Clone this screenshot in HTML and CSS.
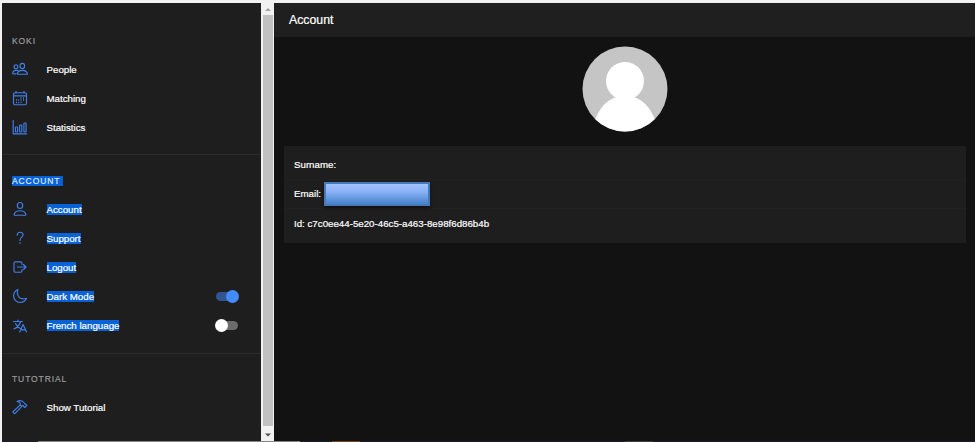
FILE: index.html
```html
<!DOCTYPE html>
<html lang="en">
<head>
<meta charset="utf-8">
<title>Account</title>
<link rel="stylesheet" href="styles.css">
</head>
<body>
<div class="app">
  <nav class="menu">
    <section class="group">
      <h2><span>KOKI</span></h2>
      <a class="item"><svg viewBox="0 0 16 16"><ellipse cx="10.3" cy="5" rx="2.3" ry="2.6"/><path d="M5.7 13.2h9.2c.5 0 .6-.4.4-.9-.6-1.9-2.6-3-5-3s-4.4 1.1-5 3c-.2.5-.1.9.4.9z"/><ellipse cx="4" cy="5.8" rx="1.9" ry="2.1"/><path d="M6.1 9.6C3.700 8.700 1.100 9.700.7 12c-.1.5 0 .8.500.8h2.500"/></svg><span>People</span></a>
      <a class="item"><svg viewBox="0 0 16 16"><rect x="1.500" y="2.700" width="13" height="12" rx="1.500"/><path d="M1.500 5.800h13M4 1.200v1.500M12 1.200v1.500"/><path class="dots" d="M8.500 8h1M11 8h1M4 10h1M6.200 10h1M8.500 10h1M11 10h1M4 12.500h1M6.200 12.500h1M8.500 12.500h1"/></svg><span>Matching</span></a>
      <a class="item"><svg viewBox="0 0 16 16"><path d="M1.200 1.300v13.500h13.500"/><rect x="3.400" y="8" width="2.200" height="5" rx=".5"/><rect x="7.600" y="6" width="2.200" height="7" rx=".5"/><rect x="11.900" y="4" width="2.200" height="9" rx=".5"/></svg><span>Statistics</span></a>
    </section>
    <section class="group selected">
      <h2><span>ACCOUNT</span></h2>
      <a class="item"><svg viewBox="0 0 16 16"><ellipse cx="8" cy="4.500" rx="2.700" ry="3"/><path d="M3.100 14.200h9.800c1 0 1.100-.5.9-1.100-.6-2.300-3.100-3.400-5.800-3.400s-5.200 1.100-5.800 3.400c-.2.6-.1 1.100.9 1.100z"/></svg><span>Account</span></a>
      <a class="item"><svg viewBox="0 0 16 16"><path d="M5.200 5.200c0-2 1.100-3 2.900-3 1.700 0 2.900 1 2.900 2.600C11 7.300 8 7.100 8 10.400"/><circle class="solid" cx="8" cy="13" r=".8"/></svg><span>Support</span></a>
      <a class="item"><svg viewBox="0 0 16 16"><path d="M10 10.500v1.300c0 .8-.6 1.400-1.400 1.400H3.400c-.8 0-1.400-.6-1.400-1.400V4.200c0-.8.600-1.400 1.400-1.400h5c.9 0 1.600.6 1.600 1.400v1.300M11.500 10.500 14 8l-2.500-2.500M5.500 8H14"/></svg><span>Logout</span></a>
      <a class="item"><svg viewBox="0 0 16 16"><path d="M5.300 4.800c0-1.200.1-2.300.6-3.300C3.100 2.700 1.600 5.100 1.600 8c0 3.600 2.900 6.500 6.500 6.500 2.900 0 5.300-1.600 6.500-4.200-1 .4-2.100.6-3.300.6-3.300 0-6-2.700-6-6.100z"/></svg><span>Dark Mode</span><i class="toggle on"></i></a>
      <a class="item"><svg viewBox="0 0 16 16"><path d="M1.500 3.500h9M6 2v1.500M8.600 3.500C7.700 7 4.800 9.700 2 11M3.500 5.500c.8 2 2.800 4 4.800 5M7.700 14l3.400-7.500 3.400 7.500M8.700 11.800h4.800"/></svg><span>French language</span><i class="toggle"></i></a>
    </section>
    <section class="group">
      <h2><span>TUTOTRIAL</span></h2>
      <a class="item"><svg viewBox="0 0 16 16"><path d="M8.200 5.800 1.300 12.500c-.3.300-.3.700 0 1l.9.900c.3.300.7.300 1 0l6.600-7M5.200 2.600c2.200-1.500 4.600-1.100 6.300.5l1.200 1.200c0 .7.300 1 .9.900l1.300 1.200-2.100 2.100-1.200-1.200c0-.7-.3-.9-.9-.8L9.800 7.400 8.200 5.800c.6-1.600-.5-2.900-3-3.200z"/></svg><span>Show Tutorial</span></a>
    </section>
  </nav>
  <div class="scrollbar">
    <svg class="arrow" viewBox="0 0 12 12"><path fill="#a3a3a3" d="M3 8h6L6 5z"/></svg>
    <div class="thumb"></div>
    <svg class="arrow end" viewBox="0 0 12 12"><path fill="#505050" d="M3 6h6L6 9z"/></svg>
  </div>
  <main>
    <header>Account</header>
    <svg class="avatar" viewBox="0 0 86 86"><defs><clipPath id="round"><circle cx="43" cy="43" r="42.500"/></clipPath></defs><g clip-path="url(#round)"><path fill="#c5c5c5" d="M0 0h86v86H0z"/><circle cx="43" cy="35" r="19" fill="#fff"/><path fill="#fff" d="M12 77C17 61 26 53 35 51h16c9 2 18 10 23 26v9H12z"/></g></svg>
    <div class="card">
      <div class="field">Surname:</div>
      <div class="field">Email: <span class="mask"></span></div>
      <div class="field">Id: c7c0ee44-5e20-46c5-a463-8e98f6d86b4b</div>
    </div>
  </main>
</div>
<div class="taskbar"><i class="window light"></i><i class="window orange"></i><i class="window gray"></i></div>
</body>
</html>
```
FILE: styles.css
```css
* { box-sizing: border-box; }
body {
  margin: 0;
  height: 442px;
  overflow: hidden;
  display: flex;
  flex-direction: column;
  padding: 3px 0 0 2px;
  background: #f1f1f1;
  font-family: "Liberation Sans", Arial, sans-serif;
  font-size: 9.730px;
  -webkit-text-stroke: .2px;
  color: #fff;
}
.app { flex: 1; display: flex; min-height: 0; }
.menu { width: 259px; background: #1e1e1e; overflow: hidden; }
.group { padding: 12.300px 0 12.500px; border-bottom: 1px solid #2b2b2b; }
.group:first-child { padding-top: 24.500px; }
.group:last-child { border: 0; }
h2 {
  margin: 0;
  height: 27px;
  padding-left: 10px;
  display: flex;
  align-items: center;
  font-size: 8.500px;
  font-weight: 400;
  letter-spacing: .9px;
  color: #9a9a9a;
}
.item { height: 29.100px; display: flex; align-items: center; padding: 0 23.500px 0 10px; }
.item svg {
  width: 16px;
  height: 16px;
  margin-right: 18.500px;
  fill: none;
  stroke: #3f7fe8;
  stroke-width: 1.150;
  stroke-linecap: round;
  stroke-linejoin: round;
}
.item .dots { stroke-width: 1.300; stroke-linecap: butt; }
.item .solid { fill: #3f7fe8; stroke: none; }
.selected span { background: #0862d6; color: #fff; line-height: 11px; }
.selected h2 span { padding-right: 3px; color: #dbe7fa; line-height: 10px; }
.toggle {
  position: relative;
  width: 22px;
  height: 9px;
  margin-left: auto;
  border-radius: 5px;
  background: #6c6c6c;
}
.toggle::after {
  content: "";
  position: absolute;
  left: -1px;
  top: -2px;
  width: 13px;
  height: 13px;
  border-radius: 50%;
  background: #fff;
}
.toggle.on { background: #315590; }
.toggle.on::after { left: 10px; background: #428cff; }
.scrollbar {
  width: 13px;
  display: flex;
  flex-direction: column;
  align-items: center;
  background: #f1f1f1;
}
.arrow { width: 12px; height: 12px; }
.thumb { flex: 1; width: 10px; background: #c1c1c1; }
.arrow.end { height: 15px; }
main { flex: 1; display: flex; flex-direction: column; background: #121212; }
header {
  height: 34px;
  padding-left: 15px;
  display: flex;
  align-items: center;
  background: #1f1f1f;
  font-size: 12.300px;
}
.avatar { width: 86px; height: 86px; margin: 9px 0 14px 307.500px; }
.card {
  margin: 0 9.500px 0 10px;
  height: 97px;
  padding: 4px 0 5px;
  background: #1e1e1e;
  border-radius: 1px;
}
.field { height: 29.500px; display: flex; align-items: center; padding-left: 10px; border-bottom: 1px solid #212121; }
.field:last-child { border: 0; }
.mask {
  width: 106px;
  height: 24px;
  margin-left: 3px;
  border: 2px solid #457ab9;
  background: linear-gradient(#a2c2ff, #88b1f4 40%, #4682cb);
  box-shadow: 0 2px 3px #0008;
}
.taskbar { height: 1px; display: flex; background: #17202b; }
.light { width: 262px; margin-left: 36px; background: #858585; }
.orange { width: 28px; margin-left: 32px; background: #7b431a; }
.gray { width: 28px; margin-left: 265px; background: #3d4043; }
```
